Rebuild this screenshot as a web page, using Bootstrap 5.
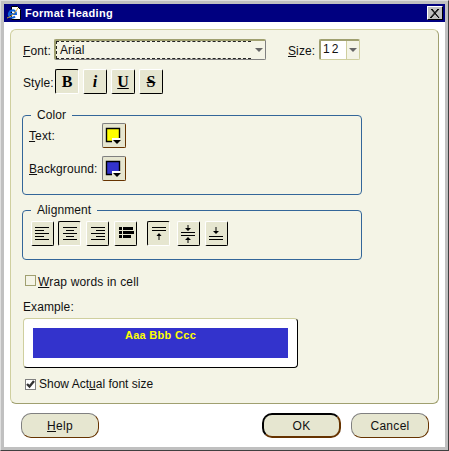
<!DOCTYPE html>
<html lang="en">
<head>
    <meta charset="UTF-8">
    <title>Format Heading</title>
    <link href="https://cdn.jsdelivr.net/npm/bootstrap@5.3.0/dist/css/bootstrap.min.css" rel="stylesheet">
    <style>
        html, body { margin: 0; width: 449px; height: 451px; overflow: hidden; background: #c0c0c0; }
        body { font: 12px/14px "Liberation Sans", Arial, sans-serif; letter-spacing: .1px; color: #111; }
        .win-frame { width: 449px; height: 451px; border: 1px solid; border-color: #dfdfdf #404040 #404040 #dfdfdf; padding: 3px; }
        .win-inner { height: 100%; background: #fff; }
        .title-bar { height: 18px; background: #000080; color: #fff; font-weight: 700; font-size: 11px; letter-spacing: .3px; padding: 0 2px; }
        .title-icon { margin-right: 3px; }
        .close-box { width: 16px; height: 14px; background: #c0c0c0; border: 1px solid; border-color: #fff #000 #000 #fff; }
        .main-panel { height: 375px; margin: 7px 6px 0; padding: 9px 12px 0; background: #f4f4e6; border: 1px solid; border-color: #cfcf9f #a0a070 #a0a070 #cfcf9f; border-radius: 6px; }
        .field-label { width: 31px; padding-top: 2px; }
        .font-combo { width: 212px; height: 21px; border: 2px solid; border-color: #a0a070 #808080 #808080 #a0a070; border-bottom-width: 1px; border-right-width: 1px; border-radius: 2px; }
        .font-value { width: 195px; height: 18px; padding-left: 3px; border: 1px dashed #222; border-right: 0; line-height: 16px; }
        .size-label { margin-left: 22px; }
        .size-combo { width: 41px; height: 21px; border: 2px solid #a0a070; border-right: 1px solid #cfcf9f; border-bottom: 1px solid #cfcf9f; border-radius: 2px; }
        .size-value { width: 26px; background: #fff; padding-left: 2px; letter-spacing: 2px; line-height: 17px; height: 18px; }
        .size-arrow { width: 13px; border-left: 1px solid #cfcf9f; }
        .down-tri { width: 0; height: 0; border-left: 4px solid transparent; border-right: 4px solid transparent; border-top: 4px solid #666; }
        .style-row { margin-top: 9px; height: 25px; }
        .style-label { width: 32px; padding-top: 2px; }
        .tool-btn { width: 24px; height: 25px; padding: 0; background: #e6e6d0; border: 1px solid; border-color: #fff #000 #000 #fff; border-radius: 2px; color: #000; line-height: 1; }
        .tool-btn:hover { background: #e6e6d0; }
        .tool-btn.is-on { border-color: #000 #fff #fff #000; }
        .style-btn { font: 700 16px/1 "Liberation Serif", serif; letter-spacing: 0; }
        .color-btn { width: 24px; height: 25px; padding: 0; background: #e6e6d0; border: 1px solid; border-color: #808080 #663300 #663300 #808080; border-radius: 2px; }
        .style-gap { gap: 4px; }
        .box-group { width: 340px; margin: 0 0 0 -1px; padding: 0 8px; border: 1px solid #336699; border-radius: 4px; }
        .box-group legend { float: none; width: auto; margin: 0; padding: 0 6px; font-size: 12px; line-height: 14px; }
        .color-group { margin-top: 14px; padding-top: 1px; padding-bottom: 13px; padding-left: 6px; }
        .color-group legend { margin-left: 2px; }
        .color-row { height: 25px; }
        .color-row + .color-row { margin-top: 8px; }
        .color-label { width: 73px; }
        .align-group { margin-top: 8px; padding-top: 4px; padding-bottom: 13px; }
        .align-btn { width: 23px; }
        .gap-4 { margin-right: 4px; }
        .gap-5 { margin-right: 5px; }
        .gap-7 { margin-right: 7px; }
        .gap-10 { margin-right: 10px; }
        .check-row { margin-left: 2px; }
        .win-check { width: 11px; height: 11px; margin-right: 3px; border: 1px solid #a0a070; background: #f4f4e6; flex: none; }
        .win-check.is-set { background: #fff; border-color: #808080; }
        .wrap-row { margin-top: 15px; height: 12px; letter-spacing: .17px; }
        .wrap-row .win-check { margin-right: 2px; margin-bottom: 1px; }
        .wrap-row span + span { padding-top: 1px; }
        .example-label { margin-top: 13px; }
        .example-box { width: 275px; height: 50px; margin-top: 4px; padding: 9px; background: #fff; border: 1px solid; border-color: #cfcf9f #000 #000 #cfcf9f; border-radius: 4px; }
        .example-fill { height: 30px; background: #3333cc; color: #ff0; font-weight: 700; font-size: 11px; line-height: 14px; text-align: center; letter-spacing: .3px; }
        .show-row { margin-top: 10px; height: 12px; letter-spacing: 0; }
        .foot-row { padding: 9px 16px 0 17px; }
        .round-btn { width: 78px; height: 25px; padding: 0; font-size: 12px; line-height: 14px; letter-spacing: .3px; color: #111; background: #e6e6d0; border: 1px solid; border-color: #808080 #663300 #663300 #808080; border-radius: 10px; }
        .round-btn:hover { background: #e6e6d0; color: #111; }
        .round-btn.is-default { width: 79px; margin-right: 10px; border: 2px solid; border-color: #000; border-bottom-color: #663300; border-right-color: #663300; }
        svg { display: block; }
    </style>
</head>
<body>
    <div class="win-frame">
        <div class="win-inner">
            <div class="title-bar d-flex align-items-center">
                <!-- icono de la ventana -->
                <svg width="16" height="16" viewBox="0 0 16 16" class="title-icon flex-shrink-0">
                    <path d="M5.5 1.500h6l3 3v10h-9z" fill="#fff" stroke="#000"/>
                    <path d="M2.500 9h7.500c0-3-2-4-4-3.500-3 .7-4 4-2.500 6 1.500 1.500 4 1.500 5.500 0" fill="none" stroke="#1060d8" stroke-width="2"/>
                    <path d="M1 13C5 12 9 8 12 3" fill="none" stroke="#e0b020"/>
                </svg>
                <span>Format Heading</span>
                <div class="close-box ms-auto me-0 d-flex align-items-center justify-content-center">
                    <svg width="10" height="9" viewBox="0 0 10 9"><path d="M1 0l8 9M2 0l7 9M8 0L0 9M9 0L1 9" stroke="#000" fill="none"/></svg>
                </div>
            </div>

            <div class="main-panel">
                <div class="d-flex align-items-center">
                    <span class="field-label"><u>F</u>ont:</span>
                    <div class="font-combo d-flex align-items-center">
                        <div class="font-value">Arial</div>
                        <div class="down-tri ms-1"></div>
                    </div>
                    <span class="field-label size-label"><u>S</u>ize:</span>
                    <div class="size-combo d-flex">
                        <div class="size-value">12</div>
                        <div class="size-arrow d-flex align-items-center justify-content-center"><div class="down-tri"></div></div>
                    </div>
                </div>

                <div class="style-row d-flex align-items-center">
                    <span class="style-label">Style:</span>
                    <div class="d-flex style-gap">
                        <button class="btn tool-btn style-btn is-on">B</button>
                        <button class="btn tool-btn style-btn"><i>i</i></button>
                        <button class="btn tool-btn style-btn"><u>U</u></button>
                        <button class="btn tool-btn style-btn"><s>S</s></button>
                    </div>
                </div>

                <fieldset class="box-group color-group">
                    <legend>Color</legend>
                    <div class="color-row d-flex align-items-center">
                        <span class="color-label"><u>T</u>ext:</span>
                        <button class="btn color-btn">
                            <svg width="22" height="23" viewBox="0 0 22 23"><path d="M3.500 4.500h13v13h-13z" fill="#ff0" stroke="#000" stroke-width="1.400"/><path d="M9 14h11v7H9z" fill="#e6e6d0"/><path d="M9 14h8v2H9z" fill="#fff"/><path d="M10 16h8l-4 4z" fill="#000"/></svg>
                        </button>
                    </div>
                    <div class="color-row d-flex align-items-center">
                        <span class="color-label"><u>B</u>ackground:</span>
                        <button class="btn color-btn">
                            <svg width="22" height="23" viewBox="0 0 22 23"><path d="M3.500 4.500h13v13h-13z" fill="#3333cc" stroke="#000" stroke-width="1.400"/><path d="M9 14h11v7H9z" fill="#e6e6d0"/><path d="M9 14h8v2H9z" fill="#fff"/><path d="M10 16h8l-4 4z" fill="#000"/></svg>
                        </button>
                    </div>
                </fieldset>

                <fieldset class="box-group align-group">
                    <legend>Alignment</legend>
                    <div class="d-flex">
                        <button class="btn tool-btn align-btn gap-4"><svg width="21" height="23" viewBox="0 0 21 23"><path d="M3 5.500h14M3 8.500h9M3 11.500h14M3 14.500h9M3 17.500h14" stroke="#000"/></svg></button>
                        <button class="btn tool-btn align-btn is-on gap-5"><svg width="21" height="23" viewBox="0 0 21 23"><path d="M4 5.500h14M7 8.500h8M4 11.500h14M7 14.500h8M4 17.500h14" stroke="#000"/></svg></button>
                        <button class="btn tool-btn align-btn gap-5"><svg width="21" height="23" viewBox="0 0 21 23"><path d="M4 5.500h14M9 8.500h9M4 11.500h14M9 14.500h9M4 17.500h14" stroke="#000"/></svg></button>
                        <button class="btn tool-btn align-btn gap-10"><svg width="21" height="23" viewBox="0 0 21 23"><path d="M4 6.500h3M8 6.500h10M4 10.500h3M8 10.500h11M4 14.500h3M8 14.500h8" stroke="#000" stroke-width="3"/></svg></button>
                        <button class="btn tool-btn align-btn is-on gap-7"><svg width="21" height="23" viewBox="0 0 21 23"><path d="M4 5.500h14M4 8.500h14M11 13v5" stroke="#000"/><path d="M8.500 14h5L11 11z" fill="#000"/></svg></button>
                        <button class="btn tool-btn align-btn gap-5"><svg width="21" height="23" viewBox="0 0 21 23"><path d="M3 10.500h14M3 13.500h14M10 3v4M10 17v4" stroke="#000"/><path d="M7 6h6l-3 3zM7 18h6l-3-3z" fill="#000"/></svg></button>
                        <button class="btn tool-btn align-btn"><svg width="21" height="23" viewBox="0 0 21 23"><path d="M3 14.500h14M3 17.500h14M10 5v5" stroke="#000"/><path d="M7 9h6l-3 3z" fill="#000"/></svg></button>
                    </div>
                </fieldset>

                <div class="wrap-row check-row d-flex align-items-center">
                    <span class="win-check"></span>
                    <span><u>W</u>rap words in cell</span>
                </div>

                <div class="example-label">Example:</div>
                <div class="example-box">
                    <div class="example-fill">Aaa Bbb Ccc</div>
                </div>

                <div class="show-row check-row d-flex align-items-center">
                    <span class="win-check is-set d-flex align-items-center justify-content-center">
                        <svg width="9" height="9" viewBox="0 0 9 9"><path d="M1 4l2.500 2.500L8 1" fill="none" stroke="#333" stroke-width="2.400"/></svg>
                    </span>
                    <span>Show Act<u>u</u>al font size</span>
                </div>
            </div>

            <div class="foot-row d-flex">
                <button class="btn round-btn"><u>H</u>elp</button>
                <button class="btn round-btn is-default ms-auto">OK</button>
                <button class="btn round-btn">Cancel</button>
            </div>
        </div>
    </div>

    <script src="https://cdn.jsdelivr.net/npm/bootstrap@5.3.0/dist/js/bootstrap.bundle.min.js"></script>
</body>
</html>
